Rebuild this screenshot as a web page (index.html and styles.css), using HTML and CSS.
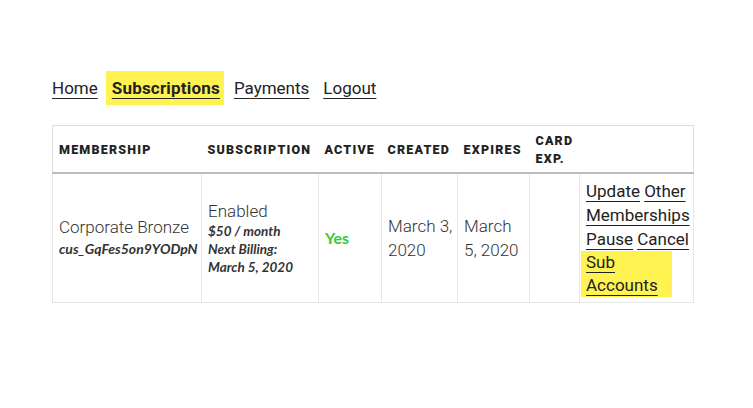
FILE: index.html
```html
<!DOCTYPE html>
<html lang="en">
<head>
<meta charset="utf-8">
<title>Subscriptions</title>
<link rel="stylesheet" href="styles.css">
</head>
<body>
<div class="page">
  <nav class="account-nav">
    <a href="#" class="nav-link">Home</a>
    <a href="#" class="nav-link active">Subscriptions</a>
    <a href="#" class="nav-link">Payments</a>
    <a href="#" class="nav-link">Logout</a>
  </nav>

  <table class="subs">
    <colgroup>
      <col class="c-membership">
      <col class="c-subscription">
      <col class="c-active">
      <col class="c-created">
      <col class="c-expires">
      <col class="c-card">
      <col class="c-actions">
    </colgroup>
    <thead>
      <tr>
        <th>Membership</th>
        <th>Subscription</th>
        <th>Active</th>
        <th>Created</th>
        <th>Expires</th>
        <th>Card Exp.</th>
        <th></th>
      </tr>
    </thead>
    <tbody>
      <tr>
        <td>
          <span class="plan">Corporate Bronze</span>
          <em class="meta cus">cus_GqFes5on9YODpN</em>
        </td>
        <td>
          <span class="plan">Enabled</span>
          <em class="meta small">$50 / month<br>Next Billing:<br>March 5, 2020</em>
        </td>
        <td><span class="yes">Yes</span></td>
        <td class="date">March 3,<br>2020</td>
        <td class="date">March<br>5, 2020</td>
        <td></td>
        <td class="actions">
          <a href="#">Update</a> <a href="#">Other Memberships</a> <a href="#">Pause</a> <a href="#">Cancel</a>
          <a href="#" class="sub-accounts">Sub Accounts</a>
        </td>
      </tr>
    </tbody>
  </table>
</div>
</body>
</html>
```

FILE: styles.css
```css
html, body {
  margin: 0;
  padding: 0;
  background: #fff;
}

body {
  font-family: Roboto, "Liberation Sans", sans-serif;
  color: #333;
  font-size: 17px;
}

.page {
  padding: 71px 0 0 52px;
}

.account-nav {
  display: flex;
  align-items: center;
  gap: 14px;
  height: 34px;
}

.nav-link {
  color: #222;
  font-size: 17px;
  line-height: 22px;
  text-decoration: underline;
  text-decoration-thickness: 1px;
  text-underline-offset: 4px;
}

.nav-link.active {
  font-weight: 700;
  letter-spacing: 0.2px;
  background: #fff352;
  padding: 6px 4px 6px 6px;
  margin: 0 -4px 0 -6px;
}

.subs {
  margin-top: 20px;
  border-collapse: collapse;
  table-layout: fixed;
  width: 641px;
  border: 1px solid #ddd;
}

.c-membership { width: 149px; }
.c-subscription { width: 117px; }
.c-active { width: 63px; }
.c-created { width: 76px; }
.c-expires { width: 72px; }
.c-card { width: 50px; }
.c-actions { width: 114px; }

.subs th {
  font-family: Roboto, sans-serif;
  font-weight: 900;
  font-size: 12.5px;
  letter-spacing: 1.2px;
  text-transform: uppercase;
  color: #222;
  text-align: left;
  line-height: 17.5px;
  padding: 6px 6px 5px;
  vertical-align: middle;
  border-bottom: 2px solid #bbb;
}

.subs td {
  border: 1px solid #e6e6e6;
  padding: 5px 2px 5px 6px;
  vertical-align: middle;
  line-height: 24px;
  font-weight: 300;
  color: #333;
}

.plan {
  display: block;
  line-height: 22px;
}

.meta {
  display: block;
  font-family: Lato, sans-serif;
  font-weight: 700;
  font-style: italic;
  font-size: 13.5px;
  line-height: 22px;
  color: #333;
}

.meta.cus {
  font-size: 14px;
}

.meta.small {
  line-height: 18px;
}

.yes {
  color: #33cc33;
  font-family: Lato, sans-serif;
  font-weight: 700;
  font-size: 16px;
}

.actions a {
  color: #222;
  font-weight: 400;
  text-decoration: underline;
  text-decoration-thickness: 1px;
  text-underline-offset: 4px;
}

.actions .sub-accounts {
  display: inline-block;
  background: #fff352;
  padding: 0 15px 0 5px;
  margin-left: -5px;
  line-height: 23px;
  width: 71px;
}
```
